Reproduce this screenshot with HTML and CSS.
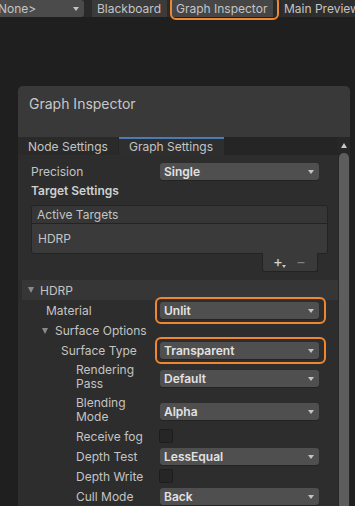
FILE: index.html
```html
<!DOCTYPE html>
<html lang="en">
<head>
  <meta charset="UTF-8">
  <title>Graph Inspector</title>
  <link rel="stylesheet" href="styles.css">
</head>
<body>
  <div class="toolbar">
    <div class="tb-dropdown"><span class="tb-text">None&gt;</span><span class="arrow"></span></div>
    <div class="tb-btn blackboard">Blackboard</div>
    <div class="tb-btn inspector marked">Graph Inspector</div>
    <div class="tb-btn preview">Main Preview</div>
  </div>

  <div class="panel">
    <div class="panel-title">Graph Inspector</div>
    <div class="panel-main">
      <div class="panel-left">
        <div class="tabs">
          <div class="tab">Node Settings</div>
          <div class="tab active">Graph Settings</div>
        </div>

        <div class="content">
          <div class="row">
            <span class="label l0">Precision</span>
            <div class="dropdown">Single<span class="arrow"></span></div>
          </div>
          <div class="heading">Target Settings</div>

          <div class="list">
            <div class="list-header">Active Targets</div>
            <div class="list-item">HDRP</div>
          </div>
          <div class="list-footer">
            <span class="plus">+<span class="plus-arrow"></span></span>
            <span class="minus">&minus;</span>
          </div>

          <div class="foldout"><span class="fold-arrow"></span>HDRP</div>

          <div class="row">
            <span class="label l1">Material</span>
            <div class="dropdown marked">Unlit<span class="arrow"></span></div>
          </div>
          <div class="row">
            <span class="label l1f"><span class="fold-arrow"></span>Surface Options</span>
          </div>
          <div class="row">
            <span class="label l2">Surface Type</span>
            <div class="dropdown marked">Transparent<span class="arrow"></span></div>
          </div>
          <div class="row tall">
            <span class="label l3">Rendering<br>Pass</span>
            <div class="dropdown">Default<span class="arrow"></span></div>
          </div>
          <div class="row tall">
            <span class="label l3">Blending<br>Mode</span>
            <div class="dropdown">Alpha<span class="arrow"></span></div>
          </div>
          <div class="row">
            <span class="label l3">Receive fog</span>
            <div class="checkbox"></div>
          </div>
          <div class="row">
            <span class="label l3">Depth Test</span>
            <div class="dropdown">LessEqual<span class="arrow"></span></div>
          </div>
          <div class="row">
            <span class="label l3">Depth Write</span>
            <div class="checkbox"></div>
          </div>
          <div class="row">
            <span class="label l3">Cull Mode</span>
            <div class="dropdown">Back<span class="arrow"></span></div>
          </div>
        </div>
      </div>

      <div class="scrollbar">
        <div class="scroll-up"><span></span></div>
        <div class="thumb"></div>
      </div>
    </div>
  </div>
</body>
</html>
```

FILE: styles.css
```css
/* Base */
html, body {
  margin: 0;
  padding: 0;
}

body {
  background: #1f1f1f;
  color: #c4c4c4;
  font-family: Inter, "Noto Sans", sans-serif;
  font-size: 12px;
  height: 506px;
  overflow: hidden;
}

/* Top toolbar */
.toolbar {
  display: flex;
  height: 17px;
  background: #2a2a2a;
  line-height: 17px;
  white-space: nowrap;
}

.toolbar > div {
  flex-shrink: 0;
}

.tb-dropdown {
  position: relative;
  width: 84px;
  background: #4b4b4b;
  border-radius: 0 3px 3px 0;
  overflow: hidden;
}

.tb-text {
  margin-left: -2px;
}

.tb-dropdown .arrow {
  position: absolute;
  right: 5px;
  top: 7px;
}

.tb-btn {
  position: relative;
  padding: 0 5px;
  background: #3b3b3b;
}

.blackboard {
  margin-left: 8px;
  width: 65px;
}

.inspector {
  margin-left: 5px;
  width: 92px;
  padding-left: 4px;
  background: #464646;
}

.preview {
  margin-left: 9px;
  padding-left: 2px;
  background: #2e2e2e;
}

/* orange annotation marks */
.marked::after {
  content: "";
  position: absolute;
  left: -5px;
  right: -7px;
  top: -5px;
  bottom: -5px;
  border: 2.5px solid #f0872f;
  border-radius: 6px;
  pointer-events: none;
}

.inspector.marked::after {
  left: -2px;
  right: -6px;
  top: -4px;
  bottom: -3px;
}

/* Panel */
.panel {
  margin: 69px 0 0 18px;
  width: 332px;
  background: #2d2d2d;
  border-radius: 5px 5px 0 0;
}

.panel-title {
  height: 51px;
  box-sizing: border-box;
  padding: 9px 0 0 11px;
  font-size: 14px;
  line-height: 18px;
  background: #393939;
  border-radius: 5px 5px 0 0;
  color: #c8c8c8;
}

.panel-main {
  display: flex;
}

.panel-left {
  flex: 1;
  min-width: 0;
}

.tabs {
  display: flex;
  height: 18px;
  background: #252525;
  line-height: 20px;
}

.tab {
  padding: 0 10px;
  width: 80px;
  background: #2a2a2a;
}

.tab.active {
  margin-left: 1px;
  width: 85px;
  background: #2e2e2e;
  box-shadow: inset 0 2px 0 #4c7ab5;
}

.content {
  display: flex;
  flex-direction: column;
  padding-top: 6px;
}

/* Property rows */
.row {
  display: grid;
  grid-template-columns: 142px 159px;
  align-items: center;
  height: 20px;
}

.row.tall {
  height: 33px;
}

.row.tall .label {
  line-height: 14px;
}

.row.tall .dropdown {
  margin-top: 3px;
}

.label {
  white-space: nowrap;
}

.l0 { padding-left: 13px; }
.l1 { padding-left: 28px; }
.l1f { padding-left: 24px; }
.l2 { padding-left: 43px; }
.l3 { padding-left: 58px; }

.dropdown {
  position: relative;
  height: 17px;
  line-height: 17px;
  padding-left: 4px;
  background: #4f4f4f;
  border-radius: 3px;
  color: #e2e2e2;
  font-weight: 600;
  box-shadow: 0 1px 0 #232323;
}

.arrow {
  position: absolute;
  right: 5px;
  top: 7px;
  width: 0;
  height: 0;
  border-left: 3.5px solid transparent;
  border-right: 3.5px solid transparent;
  border-top: 4px solid #c4c4c4;
}

.checkbox {
  width: 12px;
  height: 12px;
  margin-left: -1px;
  background: #262626;
  border: 1px solid #1d1d1d;
  border-radius: 2px;
}

.heading {
  height: 19px;
  line-height: 19px;
  padding-left: 13px;
  font-weight: 600;
  color: #d0d0d0;
}

/* Reorderable list */
.list {
  margin: 5px 10px 0 13px;
  border: 1px solid #232323;
  border-radius: 3px;
  background: #3a3a3a;
}

.list-header {
  height: 17px;
  line-height: 17px;
  padding-left: 5px;
  background: #363636;
  border-bottom: 1px solid #232323;
  border-radius: 3px 3px 0 0;
}

.list-item {
  height: 29px;
  line-height: 29px;
  padding-left: 6px;
}

.list-footer {
  align-self: flex-end;
  display: flex;
  gap: 13px;
  width: 56px;
  height: 19px;
  box-sizing: border-box;
  margin: -1px 20px 0 0;
  padding-left: 10px;
  background: #3a3a3a;
  border: 1px solid #232323;
  border-top: none;
  border-radius: 0 0 3px 3px;
  line-height: 17px;
  font-size: 15px;
}

.plus {
  position: relative;
  color: #d4d4d4;
}

.plus-arrow {
  position: absolute;
  right: -3px;
  bottom: 3px;
  border-left: 2.5px solid transparent;
  border-right: 2.5px solid transparent;
  border-top: 3px solid #c4c4c4;
}

.minus {
  color: #7d7d7d;
}

/* Foldouts */
.foldout {
  display: flex;
  align-items: center;
  gap: 6px;
  height: 20px;
  margin: 8px 0 0 4px;
  padding-left: 6px;
  background: #363636;
}

.fold-arrow {
  display: inline-block;
  width: 0;
  height: 0;
  border-left: 3.5px solid transparent;
  border-right: 3.5px solid transparent;
  border-top: 6px solid #8a8a8a;
}

.l1f .fold-arrow {
  margin-right: 7px;
  vertical-align: 1px;
}

/* Scrollbar */
.scrollbar {
  width: 12px;
  background: #272727;
  display: flex;
  flex-direction: column;
  align-items: center;
}

.scroll-up {
  height: 16px;
  display: flex;
  align-items: center;
}

.scroll-up span {
  width: 0;
  height: 0;
  border-left: 3.5px solid transparent;
  border-right: 3.5px solid transparent;
  border-bottom: 5px solid #c8c8c8;
}

.thumb {
  width: 10px;
  height: 400px;
  background: #5d5d5d;
  border-radius: 5px 5px 0 0;
}
```
